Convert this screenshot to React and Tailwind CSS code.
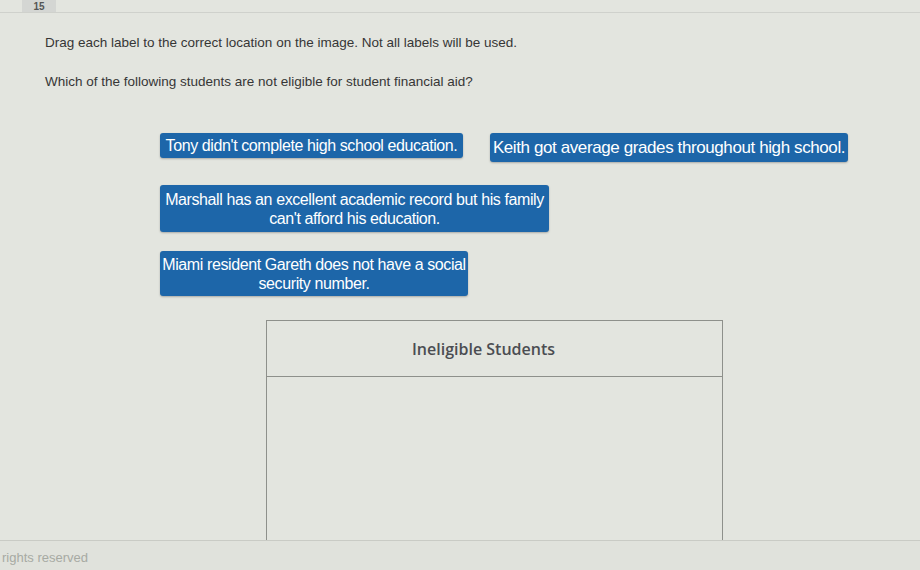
const labels = [
  ["Tony didn't complete high school education."],
  ["Keith got average grades throughout high school."],
  ["Marshall has an excellent academic record but his family", "can't afford his education."],
  ["Miami resident Gareth does not have a social", "security number."],
];

function Label({ lines, className = "" }) {
  return (
    <div
      className={`bg-[#1d66a9] text-white leading-[19px] text-center tracking-[-0.4px] whitespace-nowrap rounded-[3px] shadow-[0_1px_2px_rgba(0,0,0,0.25)] px-[2px] flex flex-col justify-center ${className}`}
    >
      {lines.map((l) => (
        <span key={l}>{l}</span>
      ))}
    </div>
  );
}

export default function App() {
  return (
    <div className="w-[920px] h-[570px] overflow-hidden bg-[#e3e5df] text-[#363636] flex flex-col font-['Liberation_Sans',Arial,sans-serif]">
      {/* question tab strip */}
      <div className="h-[13px] shrink-0 flex border-b border-[#cfd1cc]">
        <div className="w-[22px]" />
        <div className="w-[34px] bg-[#d4d6d3] flex items-center justify-center">
          <span className="text-[10px] font-bold leading-[11px] text-[#555]">15</span>
        </div>
      </div>

      {/* instructions */}
      <div className="pl-[45px] text-[13.5px] leading-[15px]">
        <p className="mt-[22px]">Drag each label to the correct location on the image. Not all labels will be used.</p>
        <p className="mt-[24px]">Which of the following students are not eligible for student financial aid?</p>
      </div>

      {/* label bank */}
      <div className="pl-[160px] mt-[44px] flex flex-col items-start">
        <div className="flex items-start gap-[27px]">
          <Label lines={labels[0]} className="w-[303px] h-[25px] text-[16px]" />
          <Label lines={labels[1]} className="w-[358px] h-[29px] text-[17px]" />
        </div>
        <Label lines={labels[2]} className="w-[389px] h-[47px] mt-[23px] text-[16px]" />
        <Label lines={labels[3]} className="w-[308px] h-[45px] mt-[19px] text-[16px]" />
      </div>

      {/* drop target */}
      <div className="ml-[266px] mt-[24px] w-[457px] flex-1 border-x border-t border-[#8e908b] flex flex-col">
        <div className="h-[56px] border-b border-[#8e908b] flex items-center justify-center">
          <span className="font-['Open_Sans',sans-serif] font-semibold text-[16px] text-[#4b4d52] -ml-[22px]">
            Ineligible Students
          </span>
        </div>
        <div className="flex-1" />
      </div>

      {/* footer */}
      <div className="h-[30px] shrink-0 border-t border-[#c9cbc5] bg-[#e0e2dc] flex items-end pb-[3px]">
        <span className="text-[13px] text-[#a7aaa3] pl-[2px]">rights reserved</span>
      </div>
    </div>
  );
}
